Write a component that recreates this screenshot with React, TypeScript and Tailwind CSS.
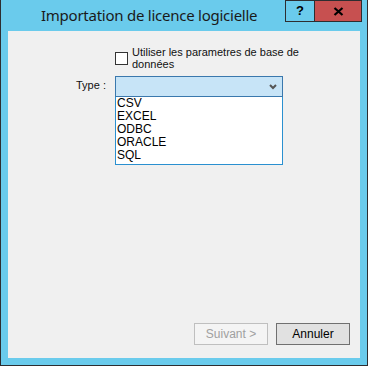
import React from "react";

export default function App() {
  const items = ["CSV", "EXCEL", "ODBC", "ORACLE", "SQL"];
  return (
    <div
      className="w-[368px] h-[366px] bg-[#6acbec] border-l border-r border-b border-[#2d2d30] flex flex-col"
      style={{ fontFamily: '"Liberation Sans", Arial, sans-serif' }}
    >
      <div className="h-[31px] flex items-start shrink-0">
        <div
          className="flex-1 pl-[40px] pt-[4px] text-[15px] tracking-[-0.25px] leading-[22px] text-[#1a1a1a]"
          style={{ fontFamily: '"Noto Sans", sans-serif' }}
        >
          Importation de licence logicielle
        </div>
        <div className="flex mr-[5px]">
          <div className="w-[30px] h-[22px] border border-[#2d2d30] bg-[#6acbec] flex items-center justify-center text-[13px] font-bold text-black">
            ?
          </div>
          <div className="w-[47px] h-[22px] border border-l-0 border-[#2d2d30] bg-[#c75050] flex items-center justify-center">
            <svg width="11" height="9" viewBox="0 0 11 9">
              <path d="M1.5 1 L9.5 8 M9.5 1 L1.5 8" stroke="#000" strokeWidth="2.2" />
            </svg>
          </div>
        </div>
      </div>
      <div className="flex-1 mx-[7px] mb-[7px] bg-[#f0f0f0] relative flex flex-col text-[11px] text-black">
        <div className="flex items-start pl-[107px] pt-[15px]">
          <div className="w-[13px] h-[13px] border border-[#333] bg-white mt-[6px] shrink-0" />
          <div className="ml-[4px] leading-[12px] text-[#111]">
            Utiliser les parametres de base de
            <br />
            données
          </div>
        </div>
        <div className="flex items-start mt-[6px]">
          <div className="w-[107px] pl-[68px] pt-[3px] leading-[13px] text-[#111]">Type :</div>
          <div className="w-[168px] flex flex-col">
            <div className="h-[21px] border border-[#3a78ad] bg-[#c7e4f7] flex items-center justify-end pr-[5px]">
              <svg width="8" height="6" viewBox="0 0 8 6">
                <path d="M1 1 L4 4 L7 1" stroke="#555" strokeWidth="2" fill="none" />
              </svg>
            </div>
            <div className="border border-t-0 border-[#2a90d0] bg-white pb-[2px] text-[12px]">
              {items.map((it) => (
                <div key={it} className="h-[13px] leading-[13px] pl-[1px] text-black">
                  {it}
                </div>
              ))}
            </div>
          </div>
        </div>
        <div className="flex-1" />
        <div className="flex justify-end gap-[8px] pr-[10px] pb-[13px]">
          <div className="w-[74px] h-[22px] border border-[#bfbfbf] bg-[#f4f4f4] flex items-center justify-center text-[#a0a0a0] text-[12px]">
            Suivant &gt;
          </div>
          <div className="w-[74px] h-[22px] border border-[#707070] bg-[#e1e1e1] flex items-center justify-center text-black text-[12px]">
            Annuler
          </div>
        </div>
      </div>
    </div>
  );
}
